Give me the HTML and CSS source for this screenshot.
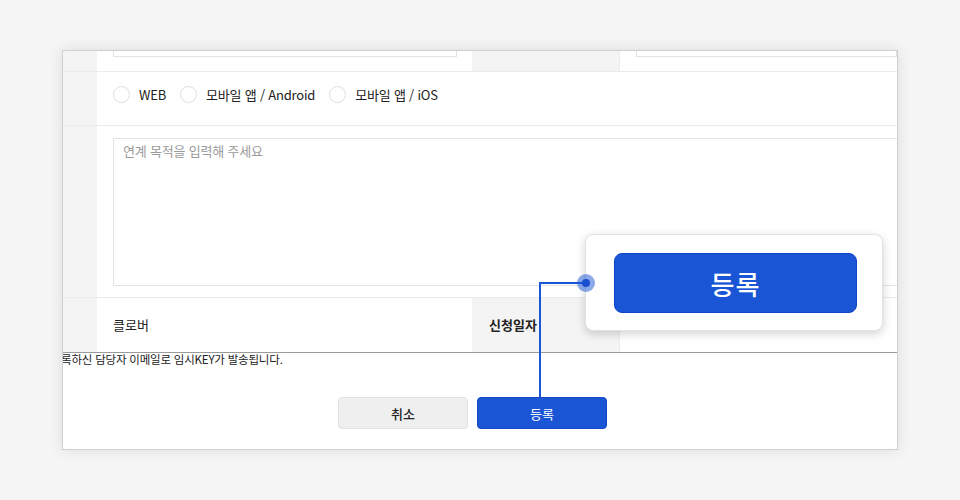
FILE: index.html
```html
<!DOCTYPE html>
<html lang="ko">
<head>
<meta charset="utf-8">
<link rel="stylesheet" href="styles.css">
</head>
<body>
<div class="stage">
  <div class="frame">
    <div class="form">
      <div class="row row1">
        <div class="side"></div>
        <div class="val val-left"><div class="input-cut"></div></div>
        <div class="label"></div>
        <div class="val val-right"><div class="input-cut"></div></div>
      </div>
      <div class="row row2">
        <div class="side"></div>
        <div class="val wide radios">
          <label class="radio"><span class="circle"></span>WEB</label>
          <label class="radio"><span class="circle"></span>모바일 앱 / Android</label>
          <label class="radio"><span class="circle"></span>모바일 앱 / iOS</label>
        </div>
      </div>
      <div class="row row3">
        <div class="side"></div>
        <div class="val wide">
          <div class="textarea">연계 목적을 입력해 주세요</div>
        </div>
      </div>
      <div class="row row4">
        <div class="side"></div>
        <div class="val val-left text">클로버</div>
        <div class="label text bold">신청일자</div>
        <div class="val val-right"></div>
      </div>
    </div>
    <p class="note">록하신 담당자 이메일로 임시KEY가 발송됩니다.</p>
    <div class="buttons">
      <button class="btn btn-cancel">취소</button>
      <button class="btn btn-primary">등록</button>
    </div>
  </div>
  <div class="zoom-card">
    <div class="zoom-btn">등록</div>
  </div>
  <svg class="connector" width="960" height="500" viewBox="0 0 960 500">
    <path d="M540 397 V283 H586" fill="none" stroke="#1a55d6" stroke-width="2"/>
    <circle cx="586" cy="283" r="9" fill="#1a55d6" fill-opacity="0.5"/>
    <circle cx="586" cy="283" r="4" fill="#1a4fcf"/>
  </svg>
</div>
</body>
</html>
```

FILE: styles.css
```css
* { box-sizing: border-box; margin: 0; padding: 0; }
html, body { width: 960px; height: 500px; overflow: hidden; }
body {
  background: #f5f5f5;
  font-family: "Noto Sans CJK KR", "Noto Sans", sans-serif;
  color: #222;
}
.stage {
  position: relative;
  width: 960px;
  height: 500px;
  padding: 50px 0 0 62px;
}
.frame {
  width: 836px;
  height: 400px;
  background: #fff;
  border: 1px solid #cfcfcf;
  box-shadow: 0 0 14px rgba(0,0,0,0.10);
  overflow: hidden;
}
.form {
  border-bottom: 1px solid #9a9a9a;
}
.row {
  display: flex;
  border-bottom: 1px solid #ebebeb;
}
.row:last-child { border-bottom: none; }
.side {
  width: 34px;
  flex: none;
  background: #f4f4f4;
}
.val { flex: none; }
.val-left { width: 375px; padding-left: 16px; }
.label {
  width: 148px;
  flex: none;
  background: #f4f4f4;
  border-right: 1px solid #ececec;
}
.val-right { flex: 1; padding-left: 16px; }
.wide { flex: 1; padding-left: 16px; }

.row1 { height: 21px; }
.input-cut {
  height: 6px;
  border: 1px solid #e2e2e2;
  border-top: none;
}
.val-left .input-cut { width: 344px; }

.row2 { height: 54px; }
.radios {
  display: flex;
  align-items: center;
  gap: 14px;
  padding-bottom: 9px;
  font-size: 13px;
  color: #222;
}
.radio {
  display: flex;
  align-items: center;
  gap: 9px;
  letter-spacing: -0.2px;
}
.circle {
  width: 17px;
  height: 17px;
  border-radius: 50%;
  border: 1px solid #dedede;
  background: #fff;
}

.row3 { height: 172px; }
.row3 .wide { padding-top: 12px; }
.textarea {
  width: 800px;
  height: 148px;
  border: 1px solid #e3e3e3;
  padding: 2px 9px;
  font-size: 13px;
  color: #9a9a9a;
  letter-spacing: -0.2px;
}

.row4 { height: 54px; }
.text {
  display: flex;
  align-items: center;
  font-size: 13px;
  color: #222;
  padding-bottom: 1px;
}
.label.text { padding-left: 17px; }
.bold { font-weight: 700; }

.note {
  font-size: 11.5px;
  line-height: 12px;
  margin: 0 0 0 -2px;
  color: #222;
  letter-spacing: -0.2px;
}
.buttons {
  display: flex;
  gap: 9px;
  padding: 32px 0 0 275px;
}
.btn {
  width: 130px;
  height: 32px;
  border-radius: 4px;
  font-family: inherit;
  font-size: 13px;
  font-weight: 500;
  cursor: pointer;
}
.btn-cancel {
  background: #efefef;
  border: 1px solid #e2e2e2;
  color: #222;
}
.btn-primary {
  background: #1a55d6;
  border: 1px solid #1448c4;
  color: #fff;
  font-weight: 400;
}

.connector {
  position: absolute;
  left: 0;
  top: 0;
  pointer-events: none;
}
.zoom-card {
  position: absolute;
  left: 585px;
  top: 234px;
  width: 298px;
  height: 97px;
  background: #fff;
  border: 1px solid #e2e2e2;
  border-radius: 8px;
  box-shadow: 0 3px 10px rgba(0,0,0,0.18);
  padding: 18px 0 0 28px;
}
.zoom-btn {
  width: 243px;
  height: 60px;
  background: #1a55d6;
  border: 1px solid #0f46c8;
  border-radius: 8px;
  color: #fff;
  font-size: 26px;
  font-weight: 500;
  display: flex;
  align-items: center;
  justify-content: center;
  letter-spacing: 1px;
}
```
